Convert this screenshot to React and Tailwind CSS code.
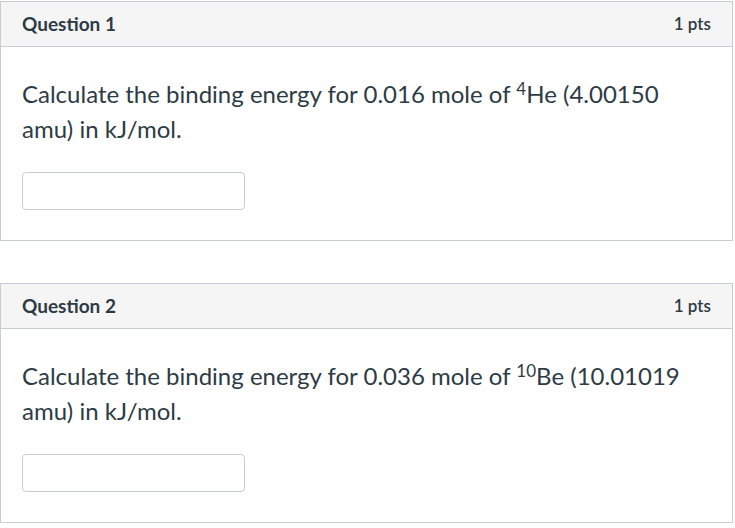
import React from "react";

const questions = [
  { id: 1, amount: "0.016", mass: "4", el: "He", amu: "4.00150" },
  { id: 2, amount: "0.036", mass: "10", el: "Be", amu: "10.01019" },
];

function QuestionCard({ q }) {
  return (
    <div className="w-[733px] border border-[#c7cdd1] bg-white">
      <div className="flex h-[45px] items-center justify-between border-b border-[#c7cdd1] bg-[#f5f5f5] pl-[21px] pr-[21px]">
        <h2 className="text-[19px] font-bold text-[#2d3b45]">Question {q.id}</h2>
        <span className="text-[17px] font-semibold text-[#2d3b45]">1 pts</span>
      </div>
      <div className="px-[21px] pt-[29px] pb-[30px]">
        <p className="text-[24px] leading-[35px] text-[#2d3b45]">
          Calculate the binding energy for {q.amount} mole of{" "}
          <sup className="text-[17px] leading-none">{q.mass}</sup>
          {q.el} ({q.amu} amu) in kJ/mol.
        </p>
        <input
          type="text"
          className="mt-[26px] block h-[38px] w-[223px] rounded-[4px] border border-[#c7cdd1] bg-white px-2 outline-none"
        />
      </div>
    </div>
  );
}

export default function App() {
  return (
    <div className="min-h-screen bg-white pt-[1px] font-['Lato',sans-serif]">
      <div className="flex flex-col gap-[42px]">
        {questions.map((q) => (
          <QuestionCard key={q.id} q={q} />
        ))}
      </div>
    </div>
  );
}
